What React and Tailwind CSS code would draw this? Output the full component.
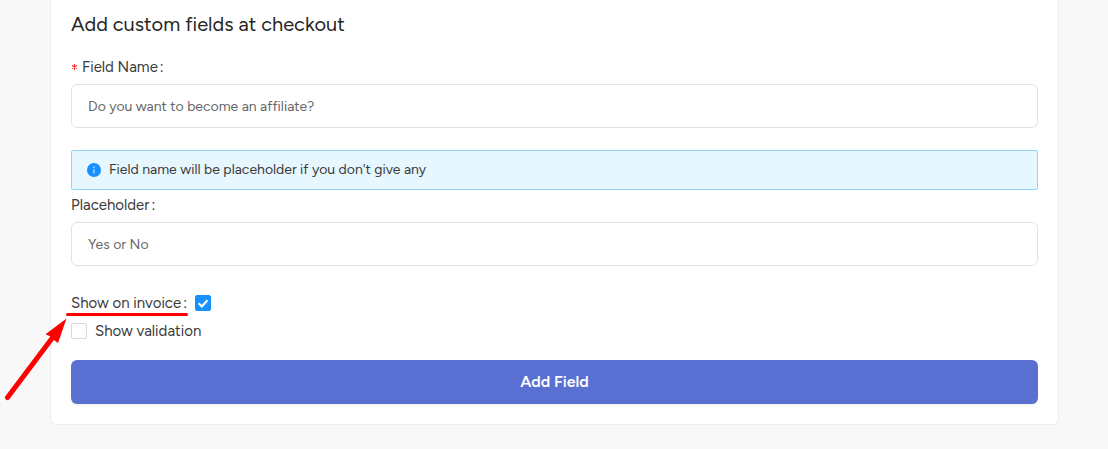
import { useState } from "react";

function InfoIcon() {
  return (
    <svg viewBox="0 0 14 14" className="size-3.5 shrink-0" aria-hidden="true">
      <circle cx="7" cy="7" r="7" fill="#1890ff" />
      <rect x="6.5" y="6" width="1" height="4.5" fill="#e6f7ff" />
      <circle cx="7" cy="4.2" r="0.75" fill="#e6f7ff" />
    </svg>
  );
}

function Checkbox({ id, checked, onChange }) {
  return (
    <span className="relative flex size-4 shrink-0">
      <input
        id={id}
        type="checkbox"
        checked={checked}
        onChange={(event) => onChange(event.target.checked)}
        className="size-4 appearance-none rounded-xs border border-[#d9d9d9] bg-white checked:border-[#1890ff] checked:bg-[#1890ff]"
      />
      {checked && (
        <svg viewBox="0 0 16 16" className="pointer-events-none absolute inset-0 size-4" aria-hidden="true">
          <path d="M3.6 8.2 L6.8 11.4 L12.5 5.3" fill="none" stroke="#fff" strokeWidth="2.1" />
        </svg>
      )}
    </span>
  );
}

function TextField({ id, placeholder }) {
  return (
    <input
      id={id}
      type="text"
      placeholder={placeholder}
      className="mt-1.5 block h-11 w-full rounded-md border border-[#e3e3e3] bg-white px-4 text-sm text-[#5c5c5c] placeholder:text-[#666666] placeholder:opacity-100"
    />
  );
}

function Colon() {
  return <span className="ml-0.5">:</span>;
}

export default function App() {
  const [onInvoice, setOnInvoice] = useState(true);
  const [validation, setValidation] = useState(false);

  return (
    <main className="min-h-screen bg-[#f8f8f8] pr-[49px] pb-6 pl-[50px] font-['Figtree','Inter',sans-serif] text-[#3a3a3a]">
      <form
        onSubmit={(event) => event.preventDefault()}
        className="rounded-b-md border border-t-0 border-[#ececf4] bg-white px-5 pt-2.5 pb-5"
      >
        <h1 className="text-xl leading-7 text-[#262626]">Add custom fields at checkout</h1>

        <label htmlFor="field-name" className="mt-4.5 flex items-center gap-1 text-[15px] leading-[22px]">
          <svg viewBox="0 0 7 8" className="h-2 w-[7px]" aria-hidden="true">
            <path d="M3.5 1 V7 M1 2.500 L6 5.500 M6 2.500 L1 5.500" stroke="#ff2f32" strokeWidth="1.1" />
          </svg>
          <span>
            Field Name
            <Colon />
          </span>
        </label>
        <TextField id="field-name" placeholder="Do you want to become an affiliate?" />

        <div className="mt-[22px] flex h-10 items-center gap-2 rounded-xs border border-[#91d5ff] bg-[#e6f7ff] px-[15px] text-sm">
          <InfoIcon />
          <p>Field name will be placeholder if you don't give any</p>
        </div>

        <label htmlFor="placeholder" className="mt-1 block text-[15px] leading-[22px]">
          Placeholder
          <Colon />
        </label>
        <TextField id="placeholder" placeholder="Yes or No" />

        <div className="relative mt-[26px] flex items-center gap-2 text-[15px] leading-[22px]">
          <label htmlFor="on-invoice">
            Show on invoice
            <Colon />
          </label>
          <Checkbox id="on-invoice" checked={onInvoice} onChange={setOnInvoice} />
          <svg viewBox="0 0 200 112" className="pointer-events-none absolute top-0 -left-[71px] h-28 w-[200px]" aria-hidden="true">
            <path d="M67.500 22.500 H186.500" stroke="#ff0000" strokeWidth="3" strokeLinecap="round" />
            <path d="M7.500 105.500 L53 45" stroke="#ff0000" strokeWidth="5" strokeLinecap="round" />
            <path d="M66.500 26.500 L45.500 42.300 L50.500 44.500 L54.500 48.500 L58 51 Z" fill="#ff0000" />
          </svg>
        </div>

        <div className="mt-1.5 flex items-center gap-2 text-[15px] leading-[22px]">
          <Checkbox id="validation" checked={validation} onChange={setValidation} />
          <label htmlFor="validation">Show validation</label>
        </div>

        <button
          type="submit"
          className="mt-4.5 block h-11 w-full rounded-md bg-[#596fd2] text-base font-semibold text-white shadow-[0_2px_0_rgba(0,0,0,0.04)]"
        >
          Add Field
        </button>
      </form>
    </main>
  );
}
